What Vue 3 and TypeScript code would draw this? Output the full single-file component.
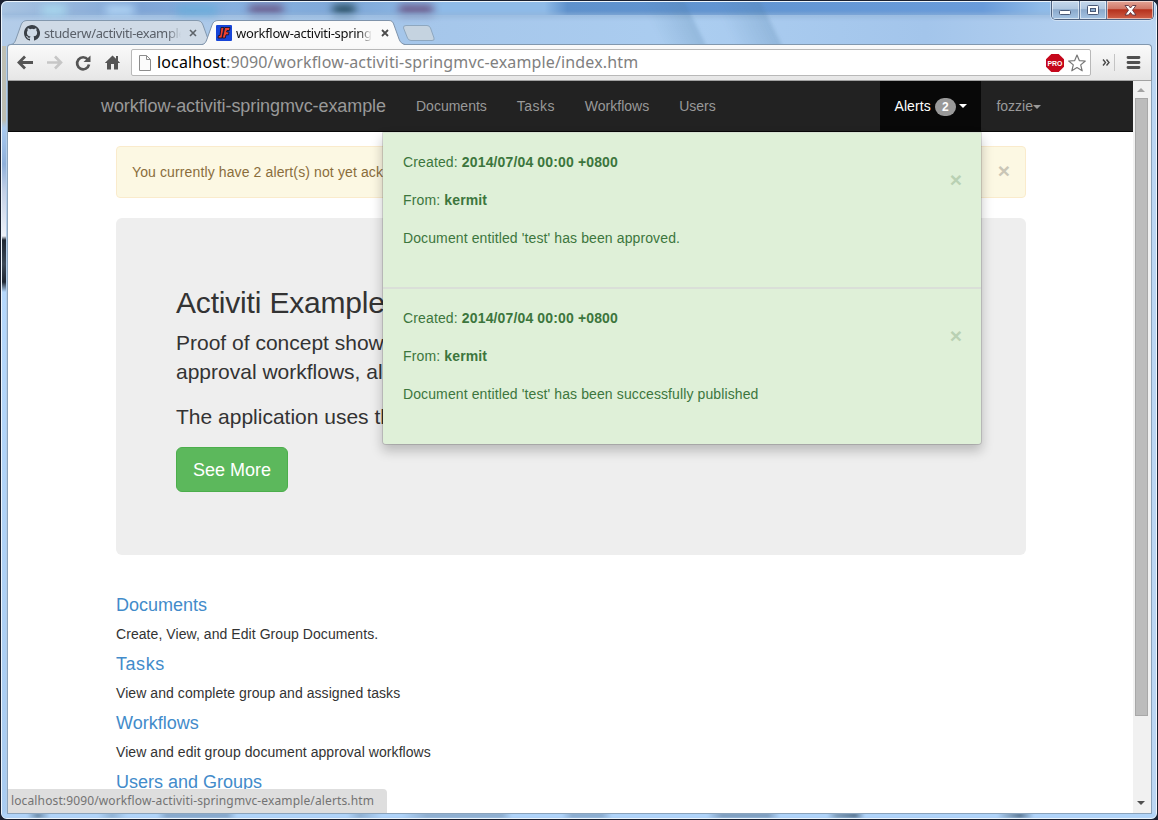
<script setup lang="ts">
interface Notice { created: string; from: string; body: string }
interface Section { title: string; text: string }

const navItems: string[] = ['Documents', 'Tasks', 'Workflows', 'Users']
const notices: Notice[] = [
  { created: '2014/07/04 00:00 +0800', from: 'kermit', body: "Document entitled 'test' has been approved." },
  { created: '2014/07/04 00:00 +0800', from: 'kermit', body: "Document entitled 'test' has been successfully published" },
]
const sections: Section[] = [
  { title: 'Documents', text: 'Create, View, and Edit Group Documents.' },
  { title: 'Tasks', text: 'View and complete group and assigned tasks' },
  { title: 'Workflows', text: 'View and edit group document approval workflows' },
  { title: 'Users and Groups', text: '' },
]
</script>

<template>
  <div class="desktop">
    <div class="window">
      <div class="smudges">
        <i class="s1"></i><i class="s2"></i><i class="s3"></i><i class="s4"></i><i class="s5"></i><i class="s6"></i>
        <i class="s8"></i><i class="s9"></i><i class="s10"></i><i class="side"></i><i class="foot"></i>
      </div>
      <header class="tabstrip">
        <div class="tab">
          <svg class="tab-shape" width="202" height="25" viewBox="0 0 202 25">
            <path d="M0 24.5C3 24 4 22 5 19L10 5C11 2 13 .5 16 .5H186C189 .5 191 2 192 5L197 19C198 22 199 24 202 24.5Z" fill="#cfdae6" stroke="#8398ae" />
          </svg>
          <svg class="fav gh" width="16" height="16" viewBox="0 0 16 16">
            <path fill="#3a4047" d="M8 0C3.58 0 0 3.58 0 8c0 3.54 2.29 6.53 5.47 7.59.4.07.55-.17.55-.38v-1.49c-2.01.37-2.53-.49-2.69-.94-.09-.23-.48-.94-.82-1.13-.28-.15-.68-.52-.01-.53.63-.01 1.08.58 1.23.82.72 1.21 1.87.87 2.33.66.07-.52.28-.87.51-1.07-1.78-.2-3.64-.89-3.64-3.95 0-.87.31-1.59.82-2.15-.08-.2-.36-1.02.08-2.12 0 0 .67-.21 2.2.82a7.5 7.5 0 0 1 4 0c1.53-1.04 2.2-.82 2.2-.82.44 1.1.16 1.92.08 2.12.51.56.82 1.27.82 2.15 0 3.07-1.87 3.75-3.65 3.95.29.25.54.73.54 1.48v2.2c0 .21.15.46.55.38A8 8 0 0 0 8 0Z" />
          </svg>
          <span class="tab-title t1">studerw/activiti-example</span>
          <svg class="tab-x x1" width="8" height="8" viewBox="0 0 8 8"><path d="M1 1L7 7M7 1L1 7" stroke="#5d6369" stroke-width="1.6" /></svg>
        </div>
        <div class="tab active">
          <svg class="tab-shape" width="203" height="26" viewBox="0 0 203 26">
            <path d="M0 25C3 24 4 22 5 19L10 5C11 2 13 .5 16 .5H187C190 .5 191 2 192 5L197 19C198 22 200 24 203 25V26H0Z" fill="#fafafa" />
            <path d="M0 24.5C3 24 4 22 5 19L10 5C11 2 13 .5 16 .5H187C190 .5 191 2 192 5L197 19C198 22 200 24 203 24.5" fill="none" stroke="#7f93aa" />
          </svg>
          <svg class="fav" width="16" height="16" viewBox="0 0 16 16">
            <rect width="16" height="16" rx="1" fill="#1745d8" />
            <path d="M5 2.500H8L6 13H2L2.500 10.500H4Z M8.800 2.500H14L13.400 5.500H11L10.600 7H13L12.500 9.800H10L9.300 13H6.300Z" fill="#f0402c" stroke="#161430" stroke-width=".9" />
          </svg>
          <span class="tab-title t2">workflow-activiti-spring</span>
          <svg class="tab-x x2" width="8" height="8" viewBox="0 0 8 8"><path d="M1 1L7 7M7 1L1 7" stroke="#4b4b4b" stroke-width="1.8" /></svg>
        </div>
        <svg class="newtab" width="33" height="17" viewBox="0 0 33 17">
          <path d="M4 .5H25Q27.500 .5 28.500 3L32 13Q33 15.500 30 15.500H9Q6.500 15.500 5.500 13L1.500 3Q1 .5 4 .5Z" fill="#c5d3e0" stroke="#8ea7bf" />
        </svg>
        <div class="caption">
          <span class="cap min">
            <svg width="13" height="7" viewBox="0 0 13 7"><rect x=".5" y="1.500" width="11" height="4" rx="1" fill="#fff" stroke="#4a5a78" /></svg>
          </span>
          <span class="cap max">
            <svg width="13" height="11" viewBox="0 0 13 11"><rect x=".5" y=".5" width="11" height="9" rx="1" fill="#fff" stroke="#4a5a78" /><rect x="3.500" y="3.500" width="5" height="3" fill="#8faed0" stroke="#4a5a78" /></svg>
          </span>
          <span class="cap close">
            <svg width="13" height="11" viewBox="0 0 13 11"><path d="M1 .5H4.500L6.500 3L8.500 .5H12L8.500 5.200L12 10H8.500L6.500 7.500L4.500 10H1L4.500 5.200Z" fill="#fff" stroke="#5c3440" stroke-width=".9" /></svg>
          </span>
        </div>
      </header>

      <div class="toolbar">
        <svg class="tools" width="118" height="35" viewBox="0 0 118 35">
          <path d="M26 17.500H13M18 11.500L12 17.500L18 23.500" fill="none" stroke="#545454" stroke-width="2.800" />
          <path d="M40 17.500H53M48 11.500L54 17.500L48 23.500" fill="none" stroke="#c6c6c6" stroke-width="2.600" />
          <path d="M80.800 14.500A6 6 0 1 0 82 19.500" fill="none" stroke="#545454" stroke-width="2.700" />
          <path d="M83.500 10.500V17H76.500Z" fill="#545454" />
          <path d="M105.500 10.500L97.800 18H100V24.500H104V19H107V24.500H111V18H113.200L111 15.800V11H109V13.800Z" fill="#545454" />
        </svg>
        <div class="omnibox">
          <svg class="doc" width="12" height="16" viewBox="0 0 12 16"><path d="M.5 .5H7.500L11.500 4.500V15.500H.5Z" fill="#fbfbfb" stroke="#8c8c8c" /><path d="M7.500 .5V4.500H11.500" fill="none" stroke="#8c8c8c" /></svg>
          <span class="url"><b>localhost</b>:9090/workflow-activiti-springmvc-example/index.htm</span>
          <svg class="badge-pro" width="18" height="18" viewBox="0 0 18 18">
            <path d="M5.300 0H12.700L18 5.300V12.700L12.700 18H5.300L0 12.700V5.300Z" fill="#c5071b" />
            <text x="9" y="11.500" text-anchor="middle" textLength="15" lengthAdjust="spacingAndGlyphs">PRO</text>
          </svg>
          <svg class="star" width="18" height="18" viewBox="0 0 18 18"><path d="M9 1L11.300 6.600L17.300 7L12.700 10.900L14.200 16.800L9 13.600L3.800 16.800L5.300 10.900L.7 7L6.700 6.600Z" fill="#fff" stroke="#777" stroke-width="1.200" stroke-linejoin="round" /></svg>
        </div>
        <svg class="more" width="50" height="35" viewBox="0 0 50 35">
          <path d="M8 14.500L10.500 17.500L8 20.500M11.500 14.500L14 17.500L11.500 20.500" fill="none" stroke="#484848" stroke-width="1.400" />
          <path d="M19.500 9V26" stroke="#c4c4c4" />
          <path d="M33 12.500H44M33 17.500H44M33 22.500H44" stroke="#505050" stroke-width="2.800" stroke-linecap="round" />
        </svg>
      </div>

      <div class="viewport">
        <main class="page">
          <nav class="navbar">
            <a class="brand">workflow-activiti-springmvc-example</a>
            <a v-for="item in navItems" :key="item" class="nav-link">{{ item }}</a>
            <a class="nav-link alerts">Alerts <span class="badge">2</span><i class="caret"></i>
            </a>
            <a class="nav-link user">fozzie<i class="caret"></i></a>
          </nav>

          <div class="dropdown">
            <section v-for="(n, i) in notices" :key="i" class="notice">
              <p>Created: <strong>{{ n.created }}</strong></p>
              <p>From: <strong>{{ n.from }}</strong></p>
              <p class="body">{{ n.body }}</p>
              <span class="dismiss">×</span>
            </section>
          </div>

          <div class="wrap">
            <div class="warning">
              <span>You currently have 2 alert(s) not yet acknowledged</span>
              <span class="dismiss-warn">×</span>
            </div>
            <section class="jumbo">
              <h2>Activiti Example</h2>
              <p>Proof of concept showing<br>approval workflows, along</p>
              <p>The application uses the</p>
              <a class="btn">See More</a>
            </section>
            <section v-for="s in sections" :key="s.title" class="entry">
              <h4>{{ s.title }}</h4>
              <p>{{ s.text }}</p>
            </section>
          </div>
          <div class="status"><span>localhost:9090/workflow-activiti-springmvc-example/alerts.htm</span></div>
        </main>
        <aside class="scrollbar">
          <i class="up"></i>
          <div class="thumb"></div>
          <i class="down"></i>
        </aside>
      </div>
    </div>
  </div>
</template>

<style>
html, body { margin: 0; overflow: hidden; }
</style>

<style scoped>
* { box-sizing: border-box; }
.desktop { width: 1158px; height: 820px; background: #1b2030; font-family: "Liberation Sans", Arial, sans-serif; font-size: 14px; line-height: 20px; color: #333; }
.window {
  position: relative; width: 1158px; height: 820px; display: flex; flex-direction: column;
  padding: 0 5px 5px 5px; border: 1px solid #1a2030; border-radius: 7px; overflow: hidden;
  background: linear-gradient(90deg, #b3cce8 0, #a5c6ea 35%, #abcdf0 60%, #a3c5eb 80%, #bcd6f2 100%);
}
.smudges { position: absolute; inset: 0; overflow: hidden; border: 1px solid #edf5fc; border-radius: 6px;
  background: linear-gradient(90deg, #a9c4e2 0, #7fa5d6 12%, #86b0e0 20%, #7fa8d8 30%, #8fbbe8 38%, #8fbbe8 47%, #5e91cc 49%, #6295d2 65%, #699bda 85%, #8fbbe8 90%, #a4c8ef 100%) 0 0 / 100% 13px no-repeat; }
.smudges i { position: absolute; filter: blur(4px); }
.s1 { left: 247px; top: 3px; width: 34px; height: 9px; background: #6a5585; }
.s2 { left: 331px; top: 3px; width: 22px; height: 9px; background: #1f4556; }
.s3 { left: 397px; top: 3px; width: 34px; height: 9px; background: #6a5080; }
.s4 { left: 0; top: 12px; width: 100%; height: 3px; background: #92b4d8; filter: blur(2px) !important; }
.s5 { left: 650px; top: -4px; width: 44px; height: 54px; background: linear-gradient(90deg, transparent, rgba(80,125,165,.26)); transform: skewX(26deg); filter: blur(2px) !important; }
.s6 { left: 722px; top: -4px; width: 48px; height: 54px; background: linear-gradient(90deg, transparent, rgba(80,125,165,.26)); transform: skewX(26deg); filter: blur(2px) !important; }
.s8 { left: 175px; top: 4px; width: 40px; height: 8px; background: #68aedb; }
.s9 { left: 104px; top: 4px; width: 28px; height: 8px; background: #b8dcfa; }
.s10 { left: 40px; top: 3px; width: 24px; height: 10px; background: #a8d8ee; }
.smudges .side { left: 0; top: 44px; width: 4px; height: 780px; filter: none;
  background: linear-gradient(180deg, #bfc0b4 0, #bcbdb2 74px, #a9caf0 82px, #8fb0da 118px, #c3d0e6 145px, #edf1f8 190px, #1e2733 194px, #3c4856 218px, #1e2733 236px, #b5d8fc 246px, #a8cbf0 100%); }
.smudges .foot { left: 0; bottom: 0; width: 100%; height: 5px; filter: blur(1px);
  background: linear-gradient(90deg, #b0d4fa 0 25px, #6d8eac 36px, #b0d4fa 48px 96px, #90b2d4 110px, #b0d4fa 125px 155px, #87a8cc 165px 225px, #b0d4fa 235px 345px, #8fb0d2 358px, #b0d4fa 380px 400px, #8fafd0 425px 500px, #b0d4fa 510px 560px, #8cadd0 570px 600px, #b0d4fa 610px 705px, #809fc0 720px 766px, #b0d4fa 778px 825px, #7d9cba 835px, #5f7c99 853px, #b0d4fa 863px 995px, #8aa9c8 1006px, #5f7c99 1018px, #b0d4fa 1032px); }
.tabstrip { position: relative; display: flex; height: 43px; flex: none; padding: 19px 0 0 5px; }
.tab { position: relative; width: 191px; height: 25px; display: flex; align-items: center; padding-left: 13px; flex: none; }
.active { width: 199px; z-index: 1; padding-left: 14px; }
.tab-shape { position: absolute; left: 0; top: 0; overflow: visible; }
.fav { position: relative; flex: none; margin-right: 4px; }
.tab-title { position: relative; flex: none; width: 137px; height: 20px; overflow: hidden; white-space: nowrap; font: 13px/20px "Noto Sans", "Open Sans", sans-serif; color: #5a6069; letter-spacing: -.38px; -webkit-mask-image: linear-gradient(90deg, #000 90%, transparent 100%); mask-image: linear-gradient(90deg, #000 90%, transparent 100%); }
.t2 { color: #111; width: 136px; letter-spacing: -.3px; }
.tab-x { position: relative; margin-left: 8px; flex: none; }
.x2 { margin-left: 9px; }
.newtab { margin: 5px 0 0 1px; }
.caption { position: absolute; right: -2px; top: 0; display: flex; height: 19px; width: 103px; border: 1px solid #4f627f; border-top: 0; border-radius: 0 0 5px 5px; overflow: hidden; box-shadow: 0 0 0 1px rgba(255,255,255,.4); }
.cap { display: flex; align-items: center; justify-content: center; width: 28px; border-right: 1px solid #61789a; background: linear-gradient(#c5d8ec 0, #afc6df 45%, #8ba9cb 48%, #a4c3e3 100%); box-shadow: inset 0 0 0 1px rgba(255,255,255,.55); }
.cap.max { width: 27px; }
.cap.min { padding-top: 5px; }
.cap.close { width: 46px; border: 0; background: linear-gradient(#e3a496 0, #cf7666 45%, #b5301c 48%, #cf6048 100%); }
.toolbar { position: relative; display: flex; align-items: center; flex: none; height: 37px; margin-left: 1px; border: 1px solid #8298ae; border-bottom: 1px solid #a2a2a2; border-radius: 4px 4px 0 0; background: linear-gradient(#fafafa, #e6e6e6); }
.tools { margin-left: -1px; flex: none; width: 118px; margin-right: 6px; }
.omnibox { display: flex; align-items: center; flex: none; width: 960px; height: 27px; border: 1px solid #b8b8b8; border-radius: 2px; background: #fff; }
.doc { margin: 0 6px 0 7px; flex: none; }
.url { flex: 1; font: 16px/25px "Noto Sans", "Open Sans", sans-serif; letter-spacing: .15px; color: #808080; white-space: nowrap; }
.url b { font-weight: 400; color: #000; }
.badge-pro text { font: bold 6.5px "Liberation Sans", Arial, sans-serif; fill: #fff; }
.badge-pro { margin-right: 4px; }
.star { margin-right: 4px; }
.more { margin-left: 4px; flex: none; }
.viewport { position: relative; flex: 1; display: flex; min-height: 0; margin-left: 1px; border: 1px solid #8ba3bb; border-top: 0; background: #fff; }
.page { position: relative; width: 1125px; flex: none; overflow: hidden; background: #fff; }
.navbar { display: flex; height: 51px; background: #222; border-bottom: 1px solid #080808; padding-left: 93px; color: #999; }
.brand { width: 285px; margin-right: 15px; font-size: 18px; line-height: 50px; white-space: nowrap; letter-spacing: -.09px; }
.nav-link { padding: 0 15px; line-height: 50px; white-space: nowrap; }
.nav-link:nth-child(3) { letter-spacing: .45px; }
.alerts { display: flex; align-items: center; margin-left: auto; width: 101px; padding: 0 14px; background: #080808; color: #fff; letter-spacing: .12px; }
.badge { width: 21px; height: 18px; margin: 1px 3px 0 4px; border-radius: 10px; background: #999; font-weight: 700; font-size: 12px; line-height: 18px; text-align: center; }
.caret { display: inline-block; width: 0; height: 0; border: 4px solid transparent; border-top-color: currentColor; border-bottom: 0; vertical-align: middle; }
.user { margin-right: 77px; }
.dropdown { position: absolute; z-index: 3; left: 374px; top: 51px; width: 600px; height: 313px; border: 1px solid rgba(0,0,0,.13); border-top-color: #d8e2d4; border-radius: 0 0 4px 4px; background: #dff0d8; background-clip: padding-box; box-shadow: 0 6px 12px rgba(0,0,0,.22); color: #3c763d; }
.notice { position: relative; height: 156px; padding: 19px 20px 0; }
.notice:first-child { border-bottom: 2px solid #dadfd8; }
.notice p { margin: 0 0 18px; letter-spacing: .14px; }
.notice p.body { letter-spacing: .11px; }
.dismiss { position: absolute; right: 19px; top: 36px; font-size: 21px; font-weight: 700; line-height: 21px; color: #b9d1b3; }
.wrap { width: 910px; margin: 14px 0 0 108px; }
.warning { display: flex; align-items: center; justify-content: space-between; height: 52px; padding: 0 15px; border: 1px solid #faebcc; border-radius: 4px; background: #fcf8e3; color: #8a6d3b; letter-spacing: .12px; }
.dismiss-warn { margin-bottom: 3px; font-size: 21px; font-weight: 700; line-height: 21px; color: #cac6b6; letter-spacing: 0; }
.jumbo { height: 337px; margin: 20px 0 40px; padding: 68px 60px 0; border-radius: 6px; background: #eee; }
.jumbo h2 { margin: 0 0 9px; font-size: 30px; line-height: 33px; font-weight: 400; letter-spacing: -.18px; }
.jumbo p { margin: 0 0 15px; font-size: 21px; line-height: 29.4px; white-space: nowrap; }
.btn { display: block; width: 112px; height: 45px; margin-top: 16px; border: 1px solid #4cae4c; border-radius: 6px; background: #5cb85c; color: #fff; font-size: 18px; line-height: 44px; text-align: center; }
.entry { height: 59px; }
.entry h4 { margin: 0 0 9px; font-size: 18px; font-weight: 400; line-height: 20px; color: #428bca; }
.entry:nth-child(4) h4 { letter-spacing: .55px; }
.entry p { margin: 0; letter-spacing: .065px; }
.status { position: absolute; z-index: 4; left: 0; bottom: 0; width: 379px; height: 24px; padding-left: 3px; border-radius: 0 4px 0 0; background: #dedede; color: #737373; font: 12px/23px "Noto Sans", "Open Sans", sans-serif; letter-spacing: .13px; white-space: nowrap; }
.scrollbar { flex: 1; display: flex; flex-direction: column; align-items: flex-start; background: #f1f1f1; }
.up { margin: 7px 0 6px 4px; border: 4px solid transparent; border-top: 0; border-bottom-color: #a3a3a3; }
.thumb { width: 13px; height: 618px; margin-left: 2px; border: 1px solid #a8a8a8; background: #bcbcbc; }
.down { margin: auto 0 8px 4px; border: 4px solid transparent; border-bottom: 0; border-top-color: #505050; }
</style>
